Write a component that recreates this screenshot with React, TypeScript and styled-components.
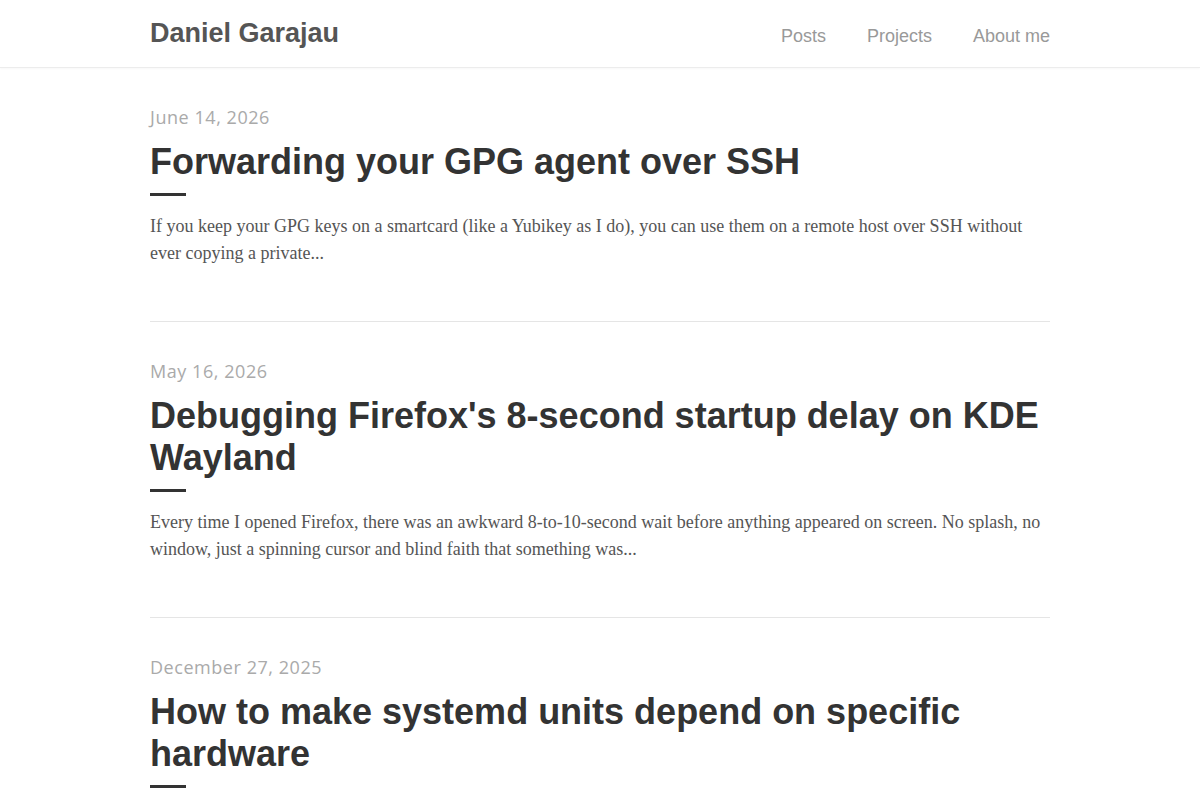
import { createGlobalStyle } from 'styled-components';
import styled from 'styled-components';

const GlobalStyle = createGlobalStyle`
  body {
    margin: 0;
    background: #fff;
    font-family: 'Liberation Sans', Arial, sans-serif;
  }
`;

const Header = styled.header`
  height: 68px;
  border-bottom: 1px solid #ececec;
  box-shadow: 0 1px 2px rgba(0, 0, 0, 0.03);
  box-sizing: border-box;
`;

const HeaderInner = styled.div`
  width: 900px;
  margin: 0 auto;
  height: 100%;
  display: flex;
  align-items: center;
  justify-content: space-between;
`;

const SiteTitle = styled.a`
  font-size: 27px;
  font-weight: 700;
  color: #555;
  text-decoration: none;
  margin-top: -1px;
`;

const Nav = styled.nav`
  display: flex;
  gap: 41px;
  margin-top: 5px;
`;

const NavLink = styled.a`
  font-size: 18px;
  color: #999;
  text-decoration: none;
`;

const Main = styled.main`
  width: 900px;
  margin: 0 auto;
  padding-top: 36px;
`;

const Post = styled.article`
  padding-bottom: 54px;
  margin-bottom: 36px;
  border-bottom: 1px solid #e5e5e5;

  &:last-child {
    border-bottom: none;
  }
`;

const PostDate = styled.div`
  font-family: 'Open Sans', sans-serif;
  font-size: 18px;
  line-height: 27px;
  color: #aaa;
  letter-spacing: 0.55px;
`;

const PostTitle = styled.h2`
  margin: 10px 0 0;
  font-size: 36px;
  line-height: 42px;
  font-weight: 700;
  color: #333;
`;

const TitleBar = styled.div`
  width: 36px;
  height: 3px;
  background: #333;
  margin-top: 10px;
`;

const Excerpt = styled.p`
  margin: 17px 0 0;
  font-family: 'Liberation Serif', 'Times New Roman', serif;
  font-size: 18px;
  line-height: 27px;
  color: #555;
`;

const posts = [
  {
    date: 'June 14, 2026',
    title: 'Forwarding your GPG agent over SSH',
    excerpt:
      'If you keep your GPG keys on a smartcard (like a Yubikey as I do), you can use them on a remote host over SSH without ever copying a private...',
  },
  {
    date: 'May 16, 2026',
    title: "Debugging Firefox's 8-second startup delay on KDE Wayland",
    excerpt:
      'Every time I opened Firefox, there was an awkward 8-to-10-second wait before anything appeared on screen. No splash, no window, just a spinning cursor and blind faith that something was...',
  },
  {
    date: 'December 27, 2025',
    title: 'How to make systemd units depend on specific hardware',
    excerpt:
      'Some services only make sense when a particular piece of hardware is plugged in. Instead of starting them at boot and letting them fail...',
  },
];

export default function App() {
  return (
    <>
      <GlobalStyle />
      <Header>
        <HeaderInner>
          <SiteTitle href="#">Daniel Garajau</SiteTitle>
          <Nav>
            <NavLink href="#">Posts</NavLink>
            <NavLink href="#">Projects</NavLink>
            <NavLink href="#">About me</NavLink>
          </Nav>
        </HeaderInner>
      </Header>
      <Main>
        {posts.map(post => (
          <Post key={post.title}>
            <PostDate>{post.date}</PostDate>
            <PostTitle>{post.title}</PostTitle>
            <TitleBar />
            <Excerpt>{post.excerpt}</Excerpt>
          </Post>
        ))}
      </Main>
    </>
  );
}
